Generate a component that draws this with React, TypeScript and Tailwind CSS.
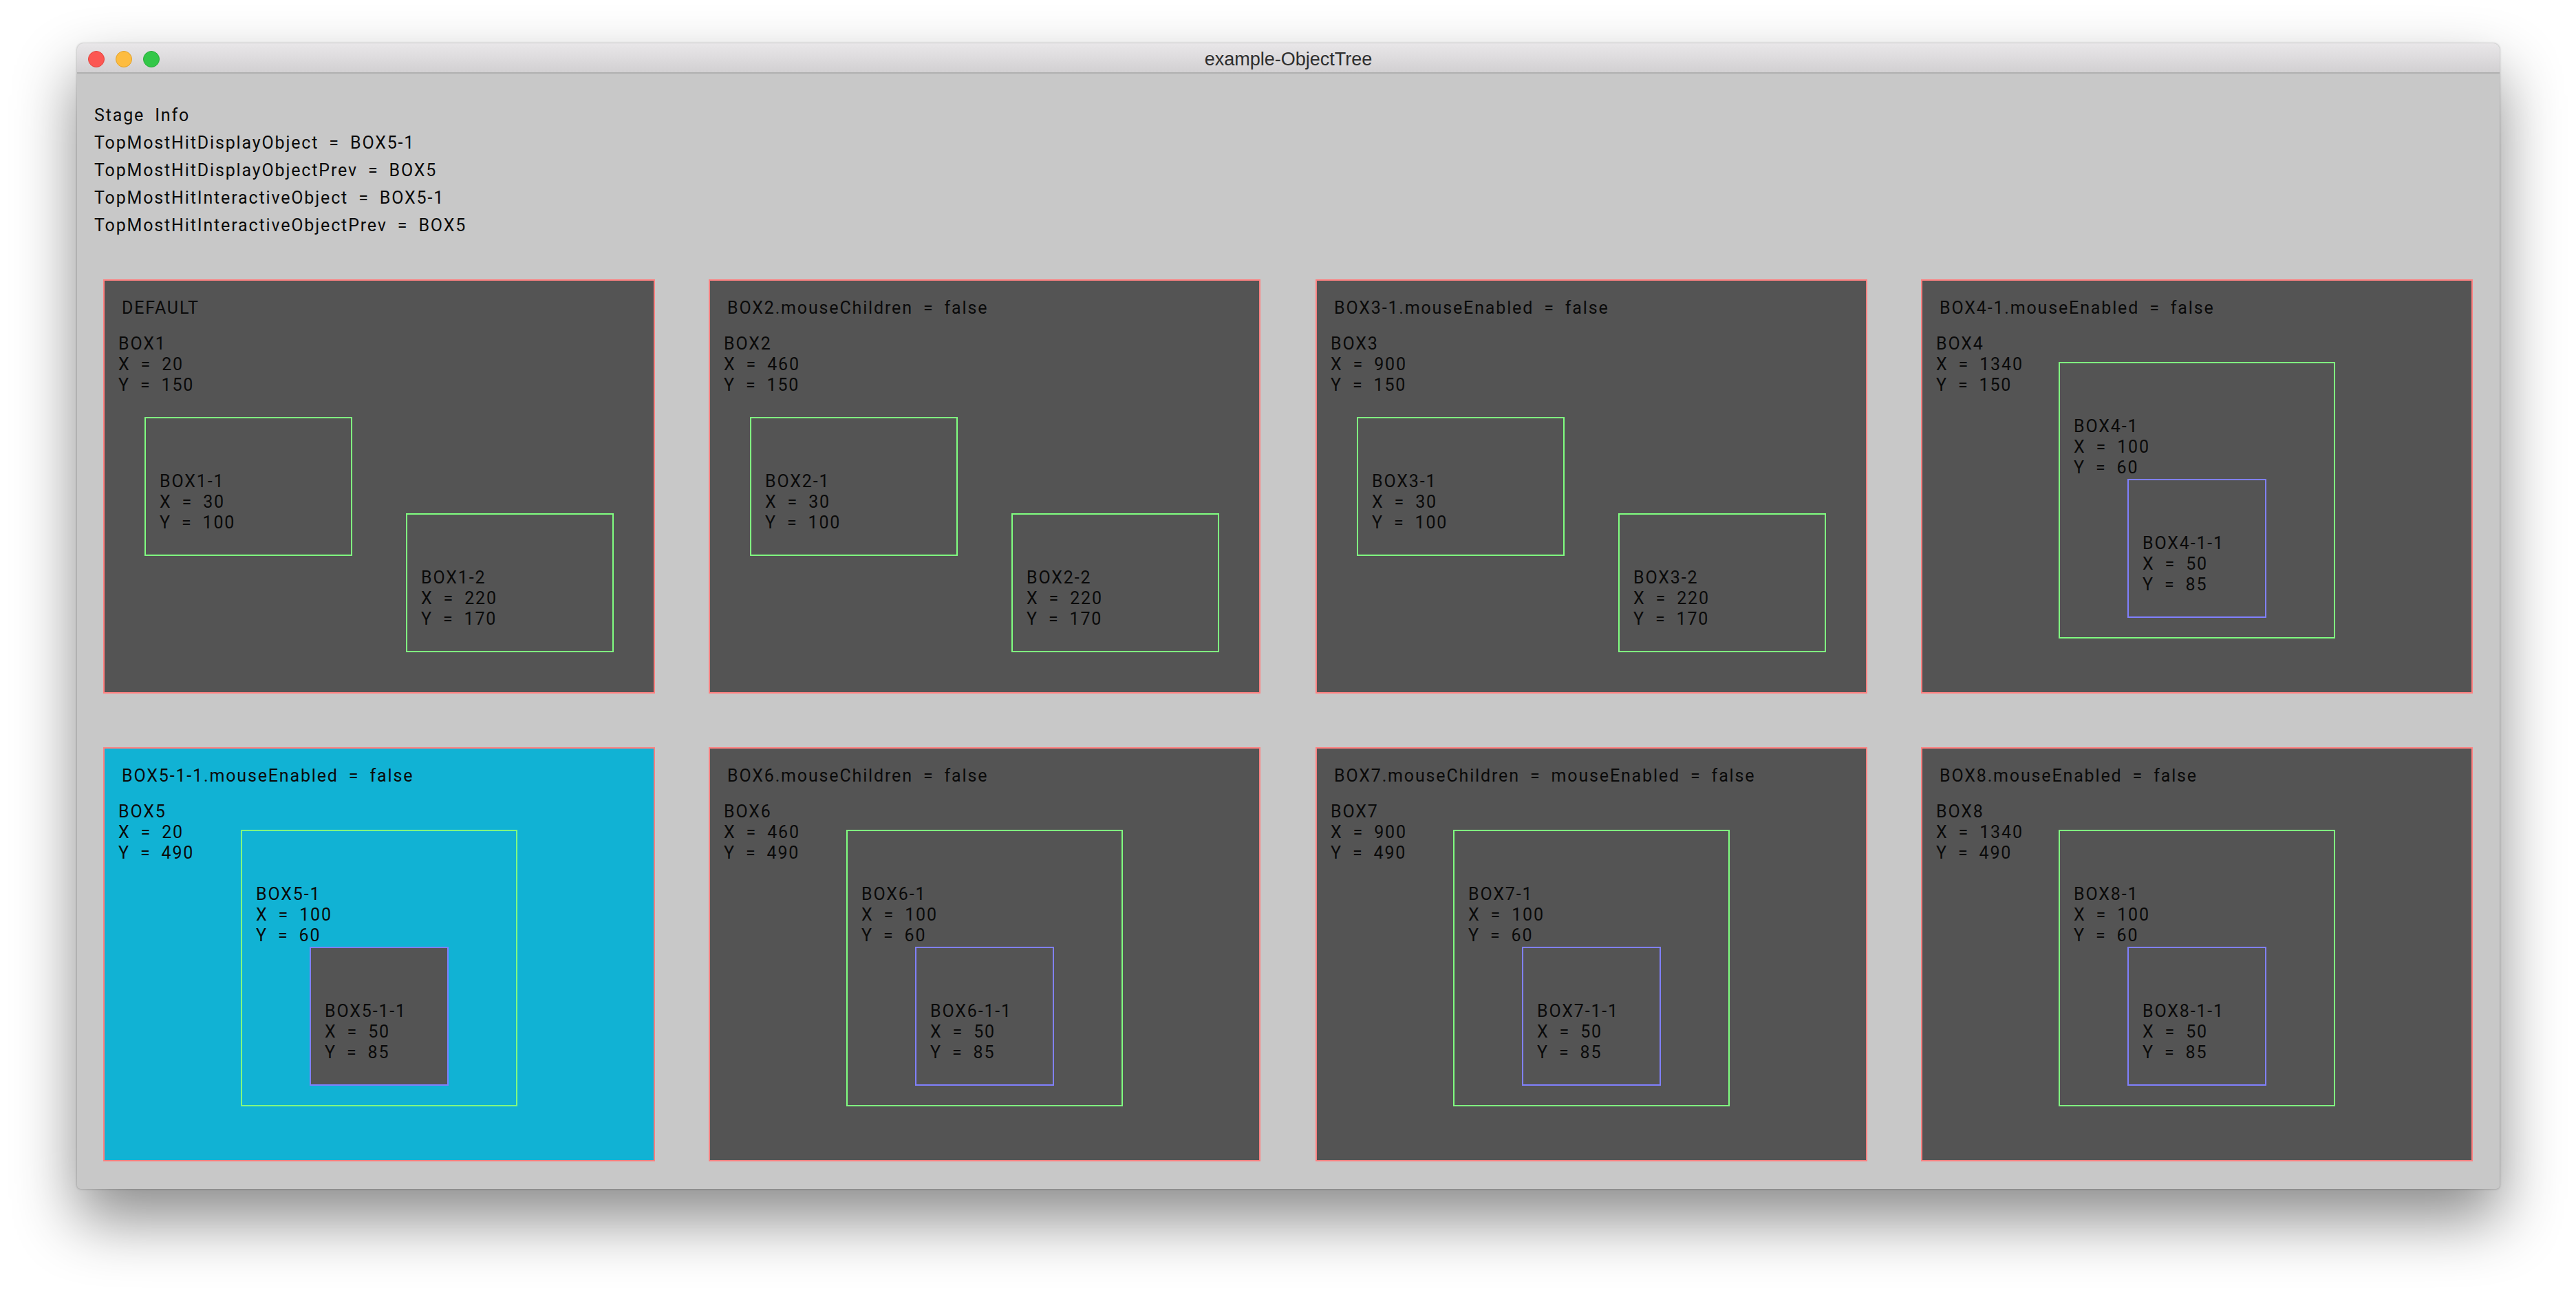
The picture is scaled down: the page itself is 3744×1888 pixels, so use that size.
const font = "[font-family:Roboto,'Liberation_Sans',sans-serif]";

function Info({ lines }: { lines: string[] }) {
  return (
    <div className="leading-[30px]">
      {lines.map((l) => (
        <div key={l}>{l}</div>
      ))}
    </div>
  );
}

function Label({ name, x, y }: { name: string; x: number; y: number }) {
  return <Info lines={[name, `X = ${x}`, `Y = ${y}`]} />;
}

function Panel({
  n,
  title,
  x,
  y,
  nested,
  active,
}: {
  n: number;
  title: string;
  x: number;
  y: number;
  nested: boolean;
  active?: boolean;
}) {
  const b = `BOX${n}`;
  return (
    <div
      className={`relative h-[602px] w-[802px] border-2 border-[#ff8080] pl-[20px] pt-[25px] ${
        active ? "bg-[#11b2d4]" : "bg-[#545454]"
      }`}
    >
      <div className="mb-[22px] ml-[5px] leading-[30px]">{title}</div>
      <Label name={b} x={x} y={y} />
      {nested ? (
        <div className="absolute left-[198px] top-[118px] h-[402px] w-[402px] border-2 border-[#80ff80] pl-[20px] pt-[77px]">
          <Label name={`${b}-1`} x={100} y={60} />
          <div
            className={`absolute left-[98px] top-[168px] h-[202px] w-[202px] border-2 border-[#8080ff] pl-[20px] pt-[77px] ${
              active ? "bg-[#545454]" : ""
            }`}
          >
            <Label name={`${b}-1-1`} x={50} y={85} />
          </div>
        </div>
      ) : (
        <>
          <div className="absolute left-[58px] top-[198px] h-[202px] w-[302px] border-2 border-[#80ff80] pl-[20px] pt-[77px]">
            <Label name={`${b}-1`} x={30} y={100} />
          </div>
          <div className="absolute left-[438px] top-[338px] h-[202px] w-[302px] border-2 border-[#80ff80] pl-[20px] pt-[77px]">
            <Label name={`${b}-2`} x={220} y={170} />
          </div>
        </>
      )}
    </div>
  );
}

const panels = [
  { n: 1, title: "DEFAULT", x: 20, y: 150, nested: false },
  { n: 2, title: "BOX2.mouseChildren = false", x: 460, y: 150, nested: false },
  { n: 3, title: "BOX3-1.mouseEnabled = false", x: 900, y: 150, nested: false },
  { n: 4, title: "BOX4-1.mouseEnabled = false", x: 1340, y: 150, nested: true },
  { n: 5, title: "BOX5-1-1.mouseEnabled = false", x: 20, y: 490, nested: true, active: true },
  { n: 6, title: "BOX6.mouseChildren = false", x: 460, y: 490, nested: true },
  { n: 7, title: "BOX7.mouseChildren = mouseEnabled = false", x: 900, y: 490, nested: true },
  { n: 8, title: "BOX8.mouseEnabled = false", x: 1340, y: 490, nested: true },
];

export default function App() {
  return (
    <div className={`h-[1888px] w-[3744px] overflow-hidden bg-white pl-[112px] pt-[63px] ${font}`}>
      <div className="h-[1665px] w-[3521px] overflow-hidden rounded-t-[9px] rounded-b-[5px] bg-[#c8c8c8] shadow-[0_44px_90px_rgba(0,0,0,0.46),0_0_3px_rgba(0,0,0,0.35)]">
        <div className="relative flex h-[44px] items-center justify-center border-b-2 border-[#b0b0b0] bg-gradient-to-b from-[#e9e7e9] to-[#d2d0d2] pt-[4px]">
          <div className="absolute left-[16px] top-[11px] flex gap-4">
            <span className="h-6 w-6 rounded-full border border-[#e2463f] bg-[#fc5753]" />
            <span className="h-6 w-6 rounded-full border border-[#e1a129] bg-[#fdbc40]" />
            <span className="h-6 w-6 rounded-full border border-[#2aab3a] bg-[#33c748]" />
          </div>
          <span className="text-[27px] text-[#2e2e2e] [font-family:'Liberation_Sans',sans-serif]">
            example-ObjectTree
          </span>
        </div>
        <div className="text-[25px] font-normal tracking-[1.85px] text-[#0a0a0a] [word-spacing:7px]">
          <div className="h-[299px] pl-[25px] pt-[41px] leading-[40px]">
            <div>Stage Info</div>
            <div>TopMostHitDisplayObject = BOX5-1</div>
            <div>TopMostHitDisplayObjectPrev = BOX5</div>
            <div>TopMostHitInteractiveObject = BOX5-1</div>
            <div>TopMostHitInteractiveObjectPrev = BOX5</div>
          </div>
          <div className="ml-[38px] grid grid-cols-[880px_882px_880px_802px] gap-y-[78px]">
            {panels.map((p) => (
              <Panel key={p.n} {...p} />
            ))}
          </div>
        </div>
      </div>
    </div>
  );
}
